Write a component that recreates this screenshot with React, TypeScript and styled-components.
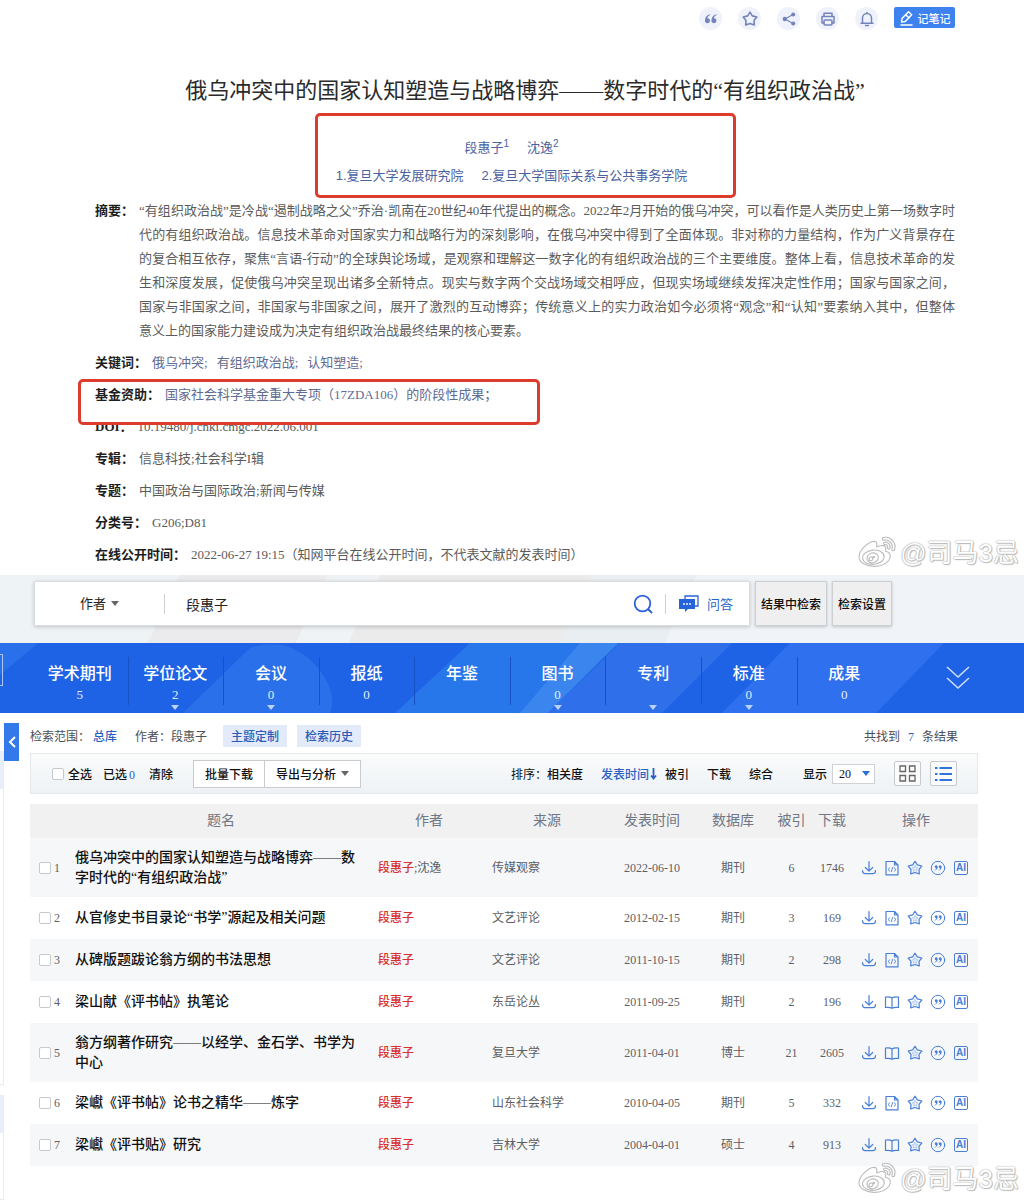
import React from "react";
import styled, { createGlobalStyle } from "styled-components";
import { FaWeibo } from "react-icons/fa";

const serif = `"Liberation Serif", "Noto Sans CJK SC", serif`;
const sans = `"Liberation Sans", "Noto Sans CJK SC", sans-serif`;

const GlobalStyle = createGlobalStyle`
  *, *::before, *::after { box-sizing: border-box; }
  body { margin: 0; background: #fff; font-family: ${serif}; color: #222; }
  a { color: inherit; text-decoration: none; }
  button, input, select { font: inherit; color: inherit; margin: 0; }
  button { cursor: pointer; padding: 0; }
`;

const Page = styled.div`
  display: flex;
  flex-direction: column;
`;

/* ---------- paper detail ---------- */

const Paper = styled.article`
  position: relative;
  padding: 7px 69px 8px 95px;
`;

const Actions = styled.div`
  display: flex;
  justify-content: flex-end;
  gap: 16px;
  height: 23px;
`;

const RoundButton = styled.button`
  display: grid;
  place-items: center;
  width: 23px;
  height: 23px;
  border: 0;
  border-radius: 50%;
  background: #eff2fb;
  color: #7484bb;
`;

const NoteButton = styled.button`
  display: flex;
  align-items: center;
  justify-content: center;
  gap: 3px;
  width: 61px;
  height: 21px;
  border: 0;
  border-radius: 2px;
  background: #3d82ee;
  color: #fff;
  font-size: 11px;
  font-weight: 500;
`;

const Title = styled.h1`
  margin: 45px 0 6px;
  font-size: 22px;
  line-height: 32px;
  font-weight: 400;
  text-align: center;
  color: #2b2b2b;
`;

const Byline = styled.div`
  max-width: 421px;
  margin: 0 auto 1px;
  padding: 18px 27px 5px 0;
  border: 3px solid #dd3b2b;
  border-radius: 5px;
  font-family: ${sans};
  font-size: 13px;
  line-height: 28px;
  color: #4a62a0;
`;

const BylineRow = styled.div`
  display: flex;
  justify-content: center;
  gap: 18px;
  height: 28px;
  sup {
    font-size: 10px;
    line-height: 10px;
  }
`;

const Fields = styled.dl`
  display: flex;
  flex-direction: column;
  gap: 8px;
  margin: 0;
  font-size: 13px;
  line-height: 24px;
`;

const Field = styled.div`
  display: flex;
  gap: 5px;
  dt {
    flex: none;
    font-weight: 700;
    color: #1d1d1d;
  }
  dd {
    margin: 0;
    color: #5b5b5b;
    text-align: justify;
  }
  a {
    color: #5f6b91;
  }
`;

const Keywords = styled.dd`
  display: flex;
  gap: 9px;
`;

const FundField = styled(Field)`
  position: relative;
  &::after {
    content: "";
    position: absolute;
    left: -17px;
    top: -4px;
    width: 462px;
    height: 46px;
    border: 3px solid #dd3b2b;
    border-radius: 5px;
    pointer-events: none;
  }
`;

const WatermarkBox = styled.div`
  position: absolute;
  right: 5px;
  bottom: 4px;
  display: flex;
  align-items: center;
  gap: 5px;
  font-family: ${sans};
  font-size: 26px;
  line-height: 36px;
  color: #fff;
  text-shadow: 0 0 1px #999, 0 0 2px #b4b4b4, 1px 1px 1px #c4c4c4;
  pointer-events: none;
  svg {
    overflow: visible;
    stroke: #bcbcbc;
    stroke-width: 16px;
  }
`;

const Watermark = () => (
  <WatermarkBox>
    <FaWeibo size={36} />
    <span>@司马3忌</span>
  </WatermarkBox>
);

/* ---------- search ---------- */

const SearchBand = styled.form`
  position: relative;
  display: flex;
  gap: 5px;
  height: 68px;
  padding: 6px 132px 17px 34px;
  background: linear-gradient(115deg, #eef3f6 0 17%, #ebebed 17% 31%, #eff3f6 31% 36%, #ebebec 36% 56%, #e8eef1 56% 66%, #f0f3f7 66%);
`;

const SearchBox = styled.div`
  flex: 1;
  display: flex;
  align-items: center;
  background: #fff;
  border: 1px solid #dadddf;
  box-shadow: 0 1px 4px rgba(0, 0, 0, 0.2);
`;

const FieldPicker = styled.label`
  display: flex;
  align-items: center;
  justify-content: center;
  gap: 4px;
  width: 130px;
  height: 20px;
  border-right: 1px solid #cfcfcf;
  select {
    appearance: none;
    border: 0;
    padding: 0;
    background: none;
    font-size: 13px;
    color: #222;
    outline: 0;
  }
`;

const Caret = styled.span<{ $color?: string }>`
  flex: none;
  width: 0;
  height: 0;
  border: 4px solid transparent;
  border-top: 5px solid ${(p) => p.$color || "#666"};
  border-bottom: 0;
`;

const QueryInput = styled.input`
  flex: 1;
  min-width: 0;
  border: 0;
  outline: 0;
  padding: 0 21px;
  background: none;
  font-size: 14px;
  color: #222;
`;

const SearchButton = styled.button`
  display: grid;
  place-items: center;
  box-sizing: content-box;
  width: 20px;
  height: 20px;
  padding-right: 12px;
  border: 0;
  border-right: 1px solid #cfcfcf;
  background: none;
`;

const AskButton = styled.button`
  display: flex;
  align-items: center;
  gap: 8px;
  margin: 0 16px 0 13px;
  border: 0;
  background: none;
  font-size: 13px;
  color: #2563c9;
`;

const SideButton = styled.button`
  flex: none;
  padding: 0 5px;
  border: 1px solid #cdd0d2;
  background: #efefef;
  box-shadow: 0 1px 3px rgba(0, 0, 0, 0.2);
  font-size: 12px;
  font-weight: 500;
  color: #111;
`;

/* ---------- category bar ---------- */

const CategoryBar = styled.nav`
  position: relative;
  display: flex;
  height: 70px;
  padding-left: 32px;
  background: #1e63e6;
  overflow: hidden;
`;

const BarArt = styled.svg`
  position: absolute;
  inset: 0;
  width: 100%;
  height: 100%;
`;

const EdgeTab = styled.span`
  position: absolute;
  left: -4px;
  top: 11px;
  width: 7px;
  height: 32px;
  border: 1px solid #a9c6f7;
`;

const Category = styled.a`
  position: relative;
  flex: 1;
  display: flex;
  flex-direction: column;
  align-items: center;
  padding-top: 20px;
  color: #fff;
  font-size: 16px;
  font-weight: 500;
  line-height: 22px;
  & + &::before {
    content: "";
    position: absolute;
    left: 0;
    top: 14px;
    height: 48px;
    border-left: 1px solid #1851c4;
  }
  small {
    height: 20px;
    font-size: 13px;
    line-height: 20px;
    font-weight: 400;
    color: #e3edff;
  }
`;

const ExpandButton = styled.button`
  position: relative;
  display: grid;
  place-items: center;
  width: 132px;
  border: 0;
  background: none;
  color: #cfe0ff;
`;

/* ---------- results ---------- */

const Results = styled.main`
  position: relative;
  padding: 12px 46px 35px 30px;
  font-size: 12px;
`;

const SidebarEdge = styled.aside`
  position: absolute;
  left: 0;
  top: 10px;
  bottom: 0;
  width: 19px;
`;

const SidebarPanel = styled.div<{ $top: number; $height: number; $head: number }>`
  position: absolute;
  left: 0;
  top: ${(p) => p.$top}px;
  width: 4px;
  height: ${(p) => p.$height}px;
  border-right: 1px solid #ececf0;
  border-bottom: 1px solid #ececf0;
  background: linear-gradient(#e9eefb ${(p) => p.$head}px, #fff ${(p) => p.$head}px);
`;

const CollapseButton = styled.button`
  position: absolute;
  left: 4px;
  top: 0;
  display: grid;
  place-items: center;
  width: 15px;
  height: 38px;
  border: 0;
  background: #3479ea;
`;

const FilterRow = styled.div`
  display: flex;
  align-items: center;
  height: 22px;
  color: #4a4f58;
`;

const Scope = styled.span<{ $gap: number }>`
  margin-right: ${(p) => p.$gap}px;
  a {
    color: #2a5fc4;
    font-weight: 500;
  }
`;

const TagButton = styled.button`
  width: 64px;
  height: 22px;
  margin-right: 10px;
  border: 0;
  background: #e3ebfb;
  color: #2a5bb8;
  font-weight: 500;
`;

const Total = styled.span`
  margin-left: auto;
  padding-right: 20px;
  em {
    margin: 0 5px;
    font-style: normal;
    color: #2a5fc4;
  }
`;

const Toolbar = styled.div`
  display: flex;
  align-items: center;
  height: 41px;
  margin: 6px 0 10px;
  padding: 0 20px 0 21px;
  border: 1px solid #e6e9ec;
  background: linear-gradient(#fafbfb, #eef2f6);
  color: #111;
`;

const CheckLabel = styled.label`
  display: flex;
  align-items: center;
`;

const Check = styled.input`
  appearance: none;
  flex: none;
  width: 12px;
  height: 12px;
  border: 1px solid #c6c9cd;
  border-radius: 2px;
  background: #fff;
`;

const Selection = styled.div`
  display: flex;
  align-items: center;
  margin-right: 20px;
  font-weight: 500;
  ${Check} {
    margin-right: 4px;
  }
  span {
    margin: 0 14px 0 11px;
  }
  b {
    margin-left: 2px;
    font-weight: 400;
    color: #2a5fc4;
  }
`;

const TextButton = styled.button<{ $active?: boolean }>`
  display: flex;
  align-items: center;
  border: 0;
  background: none;
  font-weight: 500;
  color: ${(p) => (p.$active ? "#2a5fc4" : "#111")};
`;

const OutlineGroup = styled.div`
  display: flex;
  button {
    display: flex;
    align-items: center;
    gap: 5px;
    height: 28px;
    padding: 0 11px;
    border: 1px solid #c9cbce;
    background: #fff;
    font-weight: 500;
  }
  button + button {
    margin-left: -1px;
  }
`;

const Sorting = styled.div`
  display: flex;
  align-items: center;
  gap: 18px;
  margin-left: auto;
`;

const SortPair = styled.div`
  display: flex;
  align-items: center;
  gap: 7px;
  &:first-child {
    gap: 0;
  }
`;

const PageSize = styled.label`
  display: flex;
  align-items: center;
  gap: 5px;
  margin: 0 19px 0 30px;
  font-weight: 500;
`;

const SizeBox = styled.span`
  display: flex;
  align-items: center;
  width: 43px;
  height: 20px;
  padding: 0 4px 0 6px;
  border: 1px solid #cfd1d4;
  background: #fff;
  select {
    flex: 1;
    appearance: none;
    min-width: 0;
    padding: 0;
    border: 0;
    background: none;
    outline: 0;
  }
`;

const ViewButton = styled.button`
  display: grid;
  place-items: center;
  width: 27px;
  height: 25px;
  border: 1px solid #c6c9cd;
  border-radius: 2px;
  background: #fbfbfb;
  & + & {
    margin-left: 9px;
  }
`;

const Table = styled.table`
  width: 100%;
  table-layout: fixed;
  border-collapse: collapse;
  font-size: 12px;
  line-height: 20px;
  color: #5c5f66;
  th {
    height: 34px;
    padding: 0;
    background: #f1f1f1;
    font-size: 14px;
    font-weight: 400;
    color: #6f7686;
  }
  td {
    padding: 0;
    text-align: center;
  }
  tbody tr:nth-child(odd) {
    background: #f6f7f9;
  }
`;

const Row = styled.tr<{ $tall?: boolean }>`
  height: ${(p) => (p.$tall ? 59 : 42)}px;
`;

const PickLabel = styled(CheckLabel)`
  gap: 3px;
  padding-left: 9px;
`;

const TitleLink = styled.a`
  display: block;
  padding: 0 15px 0 8px;
  font-size: 14px;
  font-weight: 500;
  text-align: left;
  color: #111;
`;

const AuthorCell = styled.div`
  padding-left: 3px;
  text-align: left;
  a {
    color: #d9302f;
    font-weight: 500;
  }
`;

const SourceLink = styled.a`
  display: block;
  padding-left: 9px;
  text-align: left;
`;

const Ops = styled.div`
  display: flex;
  gap: 7px;
  padding-left: 7px;
  button {
    display: grid;
    border: 0;
    background: none;
    color: #4a7fd6;
  }
`;

/* ---------- icons ---------- */

const Glyph = ({ size = 16, children, width = 1.2 }: { size?: number; width?: number; children: React.ReactNode }) => (
  <svg width={size} height={size} viewBox="0 0 16 16" fill="none" stroke="currentColor" strokeWidth={width} strokeLinejoin="round" strokeLinecap="round" aria-hidden="true">
    {children}
  </svg>
);

const starPath = "M8 1.2 10.300 4.900 14.800 6 12 9.400 12.300 13.900 8 12.500 3.700 13.900 4 9.400 1.200 6 5.700 4.900Z";

const icons = {
  quote: (
    <Glyph>
      <path fill="currentColor" stroke="none" d="M7 3.3C4.200 4 2 6 2 9.300A2.500 2.500 0 1 0 4.400 7.200C4.600 5.800 5.600 4.800 7.300 4.100ZM13.500 3.300C10.700 4 8.500 6 8.500 9.300a2.500 2.500 0 1 0 2.400-2.100c.2-1.400 1.200-2.400 2.900-3.100Z" />
    </Glyph>
  ),
  star: <Glyph width={1.6}><path d={starPath} /></Glyph>,
  share: (
    <Glyph>
      <path d="M12 3.500 4 8l8 4.500" />
      <g fill="currentColor" stroke="none"><circle cx="12.200" cy="3.500" r="2" /><circle cx="3.800" cy="8" r="2.200" /><circle cx="12.200" cy="12.500" r="2" /></g>
    </Glyph>
  ),
  print: (
    <Glyph width={1.5}>
      <path d="M4 5V2.200h8V5M4 12H2V5.500h12V12h-2" /><rect x="4" y="9" width="8" height="5" rx="1" />
    </Glyph>
  ),
  bell: (
    <Glyph width={1.5}>
      <path d="M2 12.200h12M3.500 12V7a4.500 4.500 0 0 1 9 0v5M8 2.300V1.500M6.500 14.500h3" />
    </Glyph>
  ),
  download: <Glyph><path d="M8 1.500V11M4.300 7.500 8 11.200l3.700-3.700M1.500 10.500c0 2 .8 3.200 2.500 3.200h8c1.700 0 2.500-1.200 2.500-3.200" /></Glyph>,
  html: (
    <Glyph>
      <path d="M2 1.500h8.500L14 5v9.800H2ZM10.500 1.500V5H14" />
      <path strokeWidth=".9" d="M5.800 7.800 4 9.500l1.800 1.700M10.200 7.800 12 9.500l-1.800 1.700M8.700 7.300l-1.400 4.400" />
    </Glyph>
  ),
  book: <Glyph><path d="M8 4C6.500 2.800 4 2.600 1.500 3v10.500c2.500-.3 5-.2 6.500.8 1.500-1 4-1.100 6.500-.8V3C12 2.600 9.500 2.800 8 4Zm0 0v10" /></Glyph>,
  favorite: <Glyph><path d={starPath} /><path stroke="#a9c3ee" strokeWidth=".7" fill="#dbe7fb" d="m8 5.300 1 2 2.100.4-1.500 1.500.3 2.200L8 10.400l-1.900 1 .3-2.200-1.500-1.500 2.100-.4Z" /></Glyph>,
  cite: (
    <Glyph>
      <circle cx="8" cy="8" r="6.700" strokeWidth="1" />
      <path fill="currentColor" stroke="none" d="M4.600 10.600C6.500 10 7.700 8.700 7.700 6.900A1.500 1.500 0 1 0 6.300 8.300C6.200 9.200 5.500 9.800 4.500 10.100ZM8.600 10.600c1.900-.6 3.100-1.900 3.100-3.700a1.500 1.500 0 1 0-1.400 1.400c-.1.900-.8 1.500-1.800 1.800Z" />
    </Glyph>
  ),
};

const AiBadge = styled.span`
  display: grid;
  place-items: center;
  width: 14px;
  height: 14px;
  margin: 1px;
  border: 1px solid currentColor;
  border-radius: 2px;
  font-family: ${sans};
  font-size: 10px;
  line-height: 12px;
  font-weight: 700;
`;

/* ---------- data ---------- */

const toolbarActions: [string, React.ReactNode][] = [
  ["引用", icons.quote],
  ["收藏", icons.star],
  ["分享", icons.share],
  ["打印", icons.print],
  ["关注", icons.bell],
];

const categories: { name: string; count?: number; more?: boolean }[] = [
  { name: "学术期刊", count: 5 },
  { name: "学位论文", count: 2, more: true },
  { name: "会议", count: 0, more: true },
  { name: "报纸", count: 0 },
  { name: "年鉴" },
  { name: "图书", count: 0, more: true },
  { name: "专利", more: true },
  { name: "标准", count: 0, more: true },
  { name: "成果", count: 0 },
];

type PaperRecord = { title: string; coauthor?: string; source: string; date: string; db: string; cited: number; downloads: number; reader: "html" | "book"; tall?: boolean };

const records: PaperRecord[] = [
  { title: "俄乌冲突中的国家认知塑造与战略博弈——数字时代的“有组织政治战”", coauthor: "沈逸", source: "传媒观察", date: "2022-06-10", db: "期刊", cited: 6, downloads: 1746, reader: "html", tall: true },
  { title: "从官修史书目录论“书学”源起及相关问题", source: "文艺评论", date: "2012-02-15", db: "期刊", cited: 3, downloads: 169, reader: "html" },
  { title: "从碑版题跋论翁方纲的书法思想", source: "文艺评论", date: "2011-10-15", db: "期刊", cited: 2, downloads: 298, reader: "html" },
  { title: "梁山献《评书帖》执笔论", source: "东岳论丛", date: "2011-09-25", db: "期刊", cited: 2, downloads: 196, reader: "book" },
  { title: "翁方纲著作研究——以经学、金石学、书学为中心", source: "复旦大学", date: "2011-04-01", db: "博士", cited: 21, downloads: 2605, reader: "book", tall: true },
  { title: "梁巘《评书帖》论书之精华——炼字", source: "山东社会科学", date: "2010-04-05", db: "期刊", cited: 5, downloads: 332, reader: "html" },
  { title: "梁巘《评书贴》研究", source: "吉林大学", date: "2004-04-01", db: "硕士", cited: 4, downloads: 913, reader: "book" },
];

const columns: [string, number | undefined][] = [
  ["", 37],
  ["题名", undefined],
  ["作者", 108],
  ["来源", 128],
  ["发表时间", 82],
  ["数据库", 80],
  ["被引", 37],
  ["下载", 44],
  ["操作", 124],
];

/* ---------- sections ---------- */

const PaperDetail = () => (
  <Paper>
    <Actions>
      {toolbarActions.map(([label, icon]) => (
        <RoundButton key={label} type="button" aria-label={label}>{icon}</RoundButton>
      ))}
      <NoteButton type="button">
        <Glyph width={1.5}><path d="m3 8.500 6.500-6.700 3.200 3L6.300 11.500 2.500 12ZM2 15h11M7 5l3 3" /></Glyph>
        记笔记
      </NoteButton>
    </Actions>
    <Title>俄乌冲突中的国家认知塑造与战略博弈——数字时代的“有组织政治战”</Title>
    <Byline>
      <BylineRow>
        <a href="#duan">段惠子<sup>1</sup></a>
        <a href="#shen">沈逸<sup>2</sup></a>
      </BylineRow>
      <BylineRow>
        <a href="#org1">1.复旦大学发展研究院</a>
        <a href="#org2">2.复旦大学国际关系与公共事务学院</a>
      </BylineRow>
    </Byline>
    <Fields>
      <Field>
        <dt>摘要：</dt>
        <dd>
          “有组织政治战”是冷战“遏制战略之父”乔治·凯南在20世纪40年代提出的概念。2022年2月开始的俄乌冲突，可以看作是人类历史上第一场数字时代的有组织政治战。信息技术革命对国家实力和战略行为的深刻影响，在俄乌冲突中得到了全面体现。非对称的力量结构，作为广义背景存在的复合相互依存，聚焦“言语-行动”的全球舆论场域，是观察和理解这一数字化的有组织政治战的三个主要维度。整体上看，信息技术革命的发生和深度发展，促使俄乌冲突呈现出诸多全新特点。现实与数字两个交战场域交相呼应，但现实场域继续发挥决定性作用；国家与国家之间，国家与非国家之间，非国家与非国家之间，展开了激烈的互动博弈；传统意义上的实力政治如今必须将“观念”和“认知”要素纳入其中，但整体意义上的国家能力建设成为决定有组织政治战最终结果的核心要素。
        </dd>
      </Field>
      <Field>
        <dt>关键词：</dt>
        <Keywords>
          <a href="#k1">俄乌冲突;</a>
          <a href="#k2">有组织政治战;</a>
          <a href="#k3">认知塑造;</a>
        </Keywords>
      </Field>
      <FundField>
        <dt>基金资助：</dt>
        <dd><a href="#fund">国家社会科学基金重大专项（17ZDA106）的阶段性成果；</a></dd>
      </FundField>
      <Field><dt>DOI：</dt><dd>10.19480/j.cnki.cmgc.2022.06.001</dd></Field>
      <Field><dt>专辑：</dt><dd>信息科技;社会科学I辑</dd></Field>
      <Field><dt>专题：</dt><dd>中国政治与国际政治;新闻与传媒</dd></Field>
      <Field><dt>分类号：</dt><dd>G206;D81</dd></Field>
      <Field><dt>在线公开时间：</dt><dd>2022-06-27 19:15（知网平台在线公开时间，不代表文献的发表时间）</dd></Field>
    </Fields>
    <Watermark />
  </Paper>
);

const Search = () => (
  <SearchBand onSubmit={(e) => e.preventDefault()}>
    <SearchBox>
      <FieldPicker>
        <select aria-label="检索字段"><option>作者</option></select>
        <Caret />
      </FieldPicker>
      <QueryInput aria-label="检索词" defaultValue="段惠子" />
      <SearchButton type="submit" aria-label="检索">
        <svg width="20" height="20" viewBox="0 0 20 20" fill="none" stroke="#2b62d9" strokeWidth="1.8" strokeLinecap="round">
          <circle cx="9.500" cy="9.500" r="7.800" /><path d="m15.500 15.500 3 3" />
        </svg>
      </SearchButton>
      <AskButton type="button">
        <svg width="20" height="18" viewBox="0 0 20 18" fill="none">
          <path d="M6 4V1h13v10h-3" stroke="#2b62d9" strokeWidth="1.300" />
          <path d="M0 4h16v10H9l-3 3v-3H0Z" fill="#2563db" />
          <g fill="#fff"><circle cx="5" cy="9" r=".9" /><circle cx="8" cy="9" r=".9" /><circle cx="11" cy="9" r=".9" /></g>
        </svg>
        问答
      </AskButton>
    </SearchBox>
    <SideButton type="button">结果中检索</SideButton>
    <SideButton type="button">检索设置</SideButton>
  </SearchBand>
);

const Categories = () => (
  <CategoryBar>
    <BarArt viewBox="0 0 1024 70" preserveAspectRatio="none" aria-hidden="true">
      <path fill="#2a70ea" d="M0 0H38L0 32ZM183 70 250 5Q290-8 318 25 338 50 330 70Z" />
      <path fill="#2877ea" d="M395 70 470 0H620L540 70Z" />
      <path fill="#3a86ee" d="M520 70 580 0H618L548 70Z" />
      <path fill="#2f70ea" d="M548 70 620 0H732L662 70Z" />
      <path fill="#2f70ee" d="M722 70 790 0H944L876 70Z" />
    </BarArt>
    <EdgeTab />
    {categories.map((c) => (
      <Category key={c.name} href={`#${c.name}`}>
        {c.name}
        <small>{c.count}</small>
        {c.more && <Caret $color="#bcd3fb" />}
      </Category>
    ))}
    <ExpandButton type="button" aria-label="展开">
      <svg width="24" height="24" viewBox="0 0 24 24" fill="none" stroke="currentColor" strokeWidth="1.500">
        <path d="m1 1 11 10L23 1M1 12l11 10 11-10" />
      </svg>
    </ExpandButton>
  </CategoryBar>
);

const ResultList = () => (
  <Results>
    <SidebarEdge>
      <SidebarPanel $top={28} $height={334} $head={38} />
      <SidebarPanel $top={372} $height={105} $head={38} />
      <CollapseButton type="button" aria-label="收起">
        <svg width="8" height="12" viewBox="0 0 8 12" fill="none" stroke="#fff" strokeWidth="2"><path d="M7 1 2 6l5 5" /></svg>
      </CollapseButton>
    </SidebarEdge>
    <FilterRow>
      <Scope $gap={18}>检索范围： <a href="#all">总库</a></Scope>
      <Scope $gap={16}>作者：段惠子</Scope>
      <TagButton type="button">主题定制</TagButton>
      <TagButton type="button">检索历史</TagButton>
      <Total>共找到 <em>7</em> 条结果</Total>
    </FilterRow>
    <Toolbar>
      <Selection>
        <CheckLabel><Check type="checkbox" />全选</CheckLabel>
        <span>已选<b>0</b></span>
        <TextButton type="button">清除</TextButton>
      </Selection>
      <OutlineGroup>
        <button type="button">批量下载</button>
        <button type="button">导出与分析<Caret /></button>
      </OutlineGroup>
      <Sorting>
        <SortPair>排序：<TextButton type="button">相关度</TextButton></SortPair>
        <SortPair>
          <TextButton type="button" $active>
            发表时间
            <svg width="9" height="12" viewBox="0 0 9 12" fill="none" stroke="currentColor" strokeWidth="1.800"><path d="M4.500 0v10M2 7.500l2.500 3 2.500-3" /></svg>
          </TextButton>
          <TextButton type="button">被引</TextButton>
        </SortPair>
        <TextButton type="button">下载</TextButton>
        <TextButton type="button">综合</TextButton>
      </Sorting>
      <PageSize>
        显示
        <SizeBox><select><option>20</option></select><Caret $color="#2a6fd8" /></SizeBox>
      </PageSize>
      <ViewButton type="button" aria-label="网格视图">
        <svg width="17" height="17" viewBox="0 0 17 17" fill="none" stroke="#666" strokeWidth="1.300">
          <path d="M1 1h5.500v5.500H1zM10.500 1H16v5.500h-5.500zM1 10.500h5.500V16H1zM10.500 10.500H16V16h-5.500z" />
        </svg>
      </ViewButton>
      <ViewButton type="button" aria-label="列表视图">
        <svg width="17" height="16" viewBox="0 0 17 16" fill="none" stroke="#2f75e0" strokeWidth="2">
          <path d="M0 2h2.500M4.500 2H17M0 8h2.500M4.500 8H17M0 14h2.500M4.500 14H17" />
        </svg>
      </ViewButton>
    </Toolbar>
    <Table>
      <colgroup>
        {columns.map(([name, width]) => <col key={name} width={width} />)}
      </colgroup>
      <thead>
        <tr>{columns.map(([name]) => <th key={name}>{name}</th>)}</tr>
      </thead>
      <tbody>
        {records.map((r, i) => (
          <Row key={r.title} $tall={r.tall}>
            <td><PickLabel><Check type="checkbox" />{i + 1}</PickLabel></td>
            <td><TitleLink href={`#paper${i + 1}`}>{r.title}</TitleLink></td>
            <td><AuthorCell><a href="#duan">段惠子</a>{r.coauthor && `;${r.coauthor}`}</AuthorCell></td>
            <td><SourceLink href={`#source${i + 1}`}>{r.source}</SourceLink></td>
            <td>{r.date}</td>
            <td>{r.db}</td>
            <td>{r.cited}</td>
            <td>{r.downloads}</td>
            <td>
              <Ops>
                <button type="button" aria-label="下载">{icons.download}</button>
                <button type="button" aria-label="阅读">{icons[r.reader]}</button>
                <button type="button" aria-label="收藏">{icons.favorite}</button>
                <button type="button" aria-label="引用">{icons.cite}</button>
                <button type="button"><AiBadge>AI</AiBadge></button>
              </Ops>
            </td>
          </Row>
        ))}
      </tbody>
    </Table>
    <Watermark />
  </Results>
);

export default function App() {
  return (
    <Page>
      <GlobalStyle />
      <PaperDetail />
      <Search />
      <Categories />
      <ResultList />
    </Page>
  );
}
